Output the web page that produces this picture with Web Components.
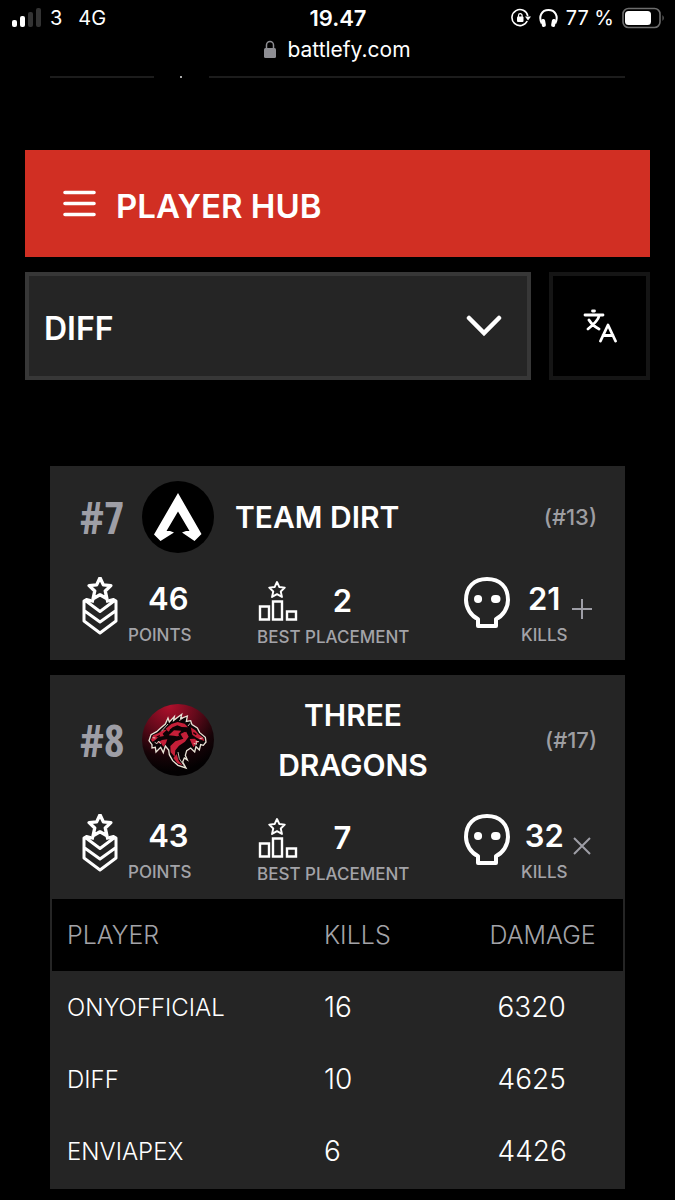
<!DOCTYPE html>
<html lang="en">
<head>
<meta charset="utf-8">
<meta name="viewport" content="width=device-width, initial-scale=1">
<title>Battlefy – Player Hub</title>
<style>
  body { margin: 0; background: #000; color: #fff; font-family: Inter, "Liberation Sans", sans-serif; }
</style>
</head>
<body>
<phone-status></phone-status>
<hub-page>
  <hub-menu>PLAYER HUB</hub-menu>
  <hub-filter></hub-filter>
  <team-card slot="teams" rank="#7" overall="(#13)" points="46" placement="2" kills="21">
    <team-logo slot="logo" kind="apex"></team-logo>TEAM DIRT
  </team-card>
  <team-card slot="teams" rank="#8" overall="(#17)" points="43" placement="7" kills="32" open>
    <team-logo slot="logo" kind="dragons"></team-logo>THREE DRAGONS
    <player-table slot="players"></player-table>
  </team-card>
</hub-page>

<script>
const define = (name, html, setup) => customElements.define(name, class extends HTMLElement {
  constructor() {
    super();
    this.attachShadow({ mode: 'open' }).innerHTML = typeof html === 'function' ? html(this) : html;
    if (setup) setup(this, this.shadowRoot);
  }
});

define('phone-status', `
<style>
  :host { display: block; font-size: 21px; }
  .bar { display: grid; grid-template-columns: 1fr auto 1fr; align-items: center; height: 36px; padding: 0 10px 0 11px; font-size: 20px; }
  .left, .right, .url { display: flex; align-items: center; }
  .right { justify-content: flex-end; gap: 8px; }
  .left span { margin-left: 8px; }
  .left span + span { margin-left: 16px; }
  time { font-weight: 600; font-size: 22px; }
  .url { justify-content: center; gap: 11px; height: 26px; }
  svg { display: block; }
</style>
<div class="bar">
  <div class="left">
    <svg width="31" height="20" viewBox="0 0 31 20"><g fill="#fff"><rect x="1" y="12" width="5" height="7" rx="2"/><rect x="9" y="8" width="5" height="11" rx="2"/></g><g fill="#333"><rect x="17" y="4" width="5" height="15" rx="2"/><rect x="25" y="0" width="5" height="19" rx="2"/></g></svg>
    <span>3</span><span>4G</span>
  </div>
  <time>19.47</time>
  <div class="right">
    <svg width="20" height="20" viewBox="0 0 20 20"><path d="M16.200 13A8 8 0 1 1 16.800 8" fill="none" stroke="#fff" stroke-width="1.600"/><path d="M14 8.600h6l-3 4z" fill="#fff"/><rect x="6" y="8.500" width="6.500" height="5.500" rx="1" fill="#fff"/><path d="M7.500 9V7.500a1.800 1.800 0 0 1 3.600 0V9" fill="none" stroke="#fff" stroke-width="1.200"/></svg>
    <svg width="19" height="20" viewBox="0 0 19 20"><path d="M2.800 15.500C-1 8 3 2 9.500 2S20 8 16.200 15.500" fill="none" stroke="#fff" stroke-width="2"/><rect x="2.500" y="11" width="4" height="8" rx="1.800" fill="#fff" transform="rotate(-10 4 15)"/><rect x="12.500" y="11" width="4" height="8" rx="1.800" fill="#fff" transform="rotate(10 15 15)"/></svg>
    <span>77 %</span>
    <svg width="43" height="22" viewBox="0 0 43 22"><rect x="1" y="1.500" width="37" height="19" rx="5.500" fill="none" stroke="#6d6d6d" stroke-width="1.600"/><rect x="3" y="4" width="26" height="14" rx="3.500" fill="#fff"/><path d="M40.500 8q2.500 3 0 6z" fill="#6d6d6d"/></svg>
  </div>
</div>
<div class="url">
  <svg width="12" height="18" viewBox="0 0 12 18"><path d="M2.500 9V5a3.500 3.500 0 0 1 7 0v4" fill="none" stroke="#8e8e93" stroke-width="1.500"/><rect x="0" y="8" width="12" height="10" rx="1.500" fill="#8e8e93"/></svg>
  <span>battlefy.com</span>
</div>`);

define('hub-page', `
<style>
  :host { display: block; padding: 0 25px 11px; }
  .rule { display: grid; grid-template-columns: 104px 1fr; column-gap: 55px; height: 2px; margin: 14px 25px 72px; position: relative; }
  .rule i { background: #1c1c1c; }
  .rule b { position: absolute; left: 130px; width: 2px; height: 2px; background: #aaa; }
  .teams { display: flex; flex-direction: column; gap: 15px; margin: 86px 25px 0; }
</style>
<div class="rule"><i></i><i></i><b></b></div>
<main><slot></slot><div class="teams"><slot name="teams"></slot></div></main>`);

define('hub-menu', `
<style>
  :host { display: block; }
  button { display: flex; align-items: center; gap: 20px; width: 100%; height: 107px; padding: 4px 38px 0; border: 0; background: #d12f23; color: #fff; font: 600 33px Inter, sans-serif; text-align: left; }
  svg { margin-bottom: 4px; }
</style>
<button type="button"><svg width="33" height="27" viewBox="0 0 33 27"><path d="M2 2.500h29M2 13.500h29M2 24.500h29" stroke="#fff" stroke-width="3.600" stroke-linecap="round"/></svg><slot></slot></button>`);

define('hub-filter', `
<style>
  :host { display: flex; gap: 18px; margin-top: 15px; }
  .pick { position: relative; flex: 1; }
  select, button { box-sizing: border-box; height: 108px; border-radius: 0; }
  select { appearance: none; display: block; width: 100%; padding: 4px 60px 0 15px; border: 4px solid #373737; background: #252525; color: #fff; font: 600 32px Inter, sans-serif; }
  .pick svg { position: absolute; right: 29px; top: 43px; pointer-events: none; }
  button { width: 101px; padding: 0; border: 4px solid #151515; background: #000; display: grid; place-items: center; }
</style>
<div class="pick">
  <select aria-label="Player"><option>DIFF</option><option>ONYOFFICIAL</option><option>ENVIAPEX</option></select>
  <svg width="36" height="22" viewBox="0 0 36 22"><path d="M3 3 18 18 33 3" fill="none" stroke="#fff" stroke-width="4.500" stroke-linecap="round"/></svg>
</div>
<button type="button" aria-label="Language"><svg width="34" height="34" viewBox="0 0 34 34" fill="none" stroke="#fff" stroke-width="2.800" stroke-linecap="round" stroke-linejoin="round"><path d="M9.500 2h2M2 6h18M16.500 6C15 12 9.500 16.500 5 20M6 11c2.500 4 6 7 10 9M17.500 32 25 16l7.500 16M20 26.500h10"/></svg></button>`);

const logos = {
  apex: `<svg viewBox="0 0 72 72"><circle cx="36" cy="36" r="36"/><path d="M36 12 59.500 53 52.500 60 40 51.500 44 50H47.500L36 30.500 24.500 50H28l4 1.500L18.500 60 12 53.500z" fill="#fff"/></svg>`,
  dragons: `<svg viewBox="0 0 216 216"><defs><radialGradient id="g" cx=".38" cy=".02" r=".92"><stop offset="0" stop-color="#b0102c"/><stop offset=".4" stop-color="#660a1b"/><stop offset=".78" stop-color="#160307"/><stop offset="1" stop-color="#030102"/></radialGradient></defs>
  <circle cx="108" cy="108" r="108" fill="url(#g)"/>
  <path d="M21 110 27 92 44 83 56 72 70 60 78 42 82 54 97 38 95 49 119 31 116 44 136 36 133 52 146 50 150 62 166 72 173 86 190 100 192 114 184 124 176 122 172 138 162 128 158 144 146 132 134 140 130 154 136 168 127 162 122 174 132 192 108 184 92 170 82 152 80 138 70 126 64 146 56 130 42 144 40 130 30 132 30 122z" fill="#0b0305" stroke="#e9e3d6" stroke-width="4"/>
  <g fill="#c51f38"><path d="M27 108 33 94 48 88 66 77 74 78 62 89 66 96 50 99 40 108 32 113z"/><path d="M44 118 60 108 76 106 72 118 64 128 57 117z"/><path d="M71 74 88 60 107 54 128 59 138 70 119 69 106 64 92 70 79 83z"/><path d="M80 94 96 79 118 80 109 90 114 98 95 95z"/><path d="M115 90 132 82 140 98 129 113 111 125 100 139 98 158 86 145 85 126 100 112 124 104z"/><path d="M146 70 160 79 170 91 184 101 187 111 172 106 160 99 151 92z"/><path d="M143 105 158 104 170 114 162 120 154 130z"/><path d="M94 162 104 150 110 170 122 184 106 178z"/></g>
  <g fill="none" stroke="#e9e3d6" stroke-width="2.500"><path d="M58 82 78 60M112 50 124 41M138 66 144 58M38 115l7 4 5-8 6 9M171 113l-9-1 2 9-9-3M108 144 112 164 127 186M32 101l8 1M182 102l-9 2"/></g>
  <path d="M44 99l10-4M154 86l9 6M84 78l13-7M105 101l12-9M137 73l-7 11M96 108l-8-7M70 87l10 9" stroke="#120204" stroke-width="4"/></svg>`
};
define('team-logo', host => `
<style>:host { display: block; width: 72px; height: 72px; } svg { display: block; width: 100%; height: 100%; }</style>${logos[host.getAttribute('kind')]}`);

const star = 'M0-10 3-3.700 9.700-3 4.700 1.800 6.200 8.700 0 5.200-6.200 8.700-4.700 1.800-9.700-3-3-3.700z';
define('team-card', host => {
  const a = n => host.getAttribute(n);
  const open = host.hasAttribute('open');
  return `
<style>
  :host { display: block; background: #252525; }
  header { display: flex; align-items: center; gap: 21px; min-height: 72px; padding: 15px 28px 24px 30px; }
  .rank { width: 41px; color: #9e9ea6; font: bold 44px/50px "Liberation Sans Narrow", "Open Sans Condensed", sans-serif; }
  h2 { max-width: 236px; margin: 0; font-size: 30px; font-weight: 600; line-height: 50px; text-align: center; }
  .overall { margin-left: auto; color: #9e9ea2; font-size: 22px; font-weight: 500; }
  .stats { display: grid; grid-template-columns: 175fr 207fr 133fr; height: 68px; padding: 0 28px 15px 32px; }
  .stat { display: flex; align-items: flex-start; }
  dl { margin: 0; display: flex; flex-direction: column-reverse; gap: 4px; text-align: center; }
  dt { color: #a3a3a8; font-size: 17px; font-weight: 500; line-height: 20px; white-space: nowrap; }
  dd { margin: 0; font-size: 31px; font-weight: 600; line-height: 44px; }
  .points dl { margin-left: 10px; }
  .points dd { padding-right: 3px; text-align: right; }
  .kills dl { margin-left: 11px; }
  .place { display: grid; grid-template-columns: 149px; grid-template-rows: 68px; }
  .place > * { grid-area: 1 / 1; }
  .place svg { margin-top: 4px; margin-left: 1px; }
  .place dl { padding-top: 2px; }
  .place dd { padding-left: 22px; }
  svg { display: block; flex: none; fill: none; stroke: #fff; stroke-linejoin: round; }
  button { margin: 22px 0 0 4px; padding: 0; border: 0; background: none; }
  button svg { stroke: #9e9ea6; stroke-width: 2; }
</style>
<article>
  <header><span class="rank">${a('rank')}</span><slot name="logo"></slot><h2><slot></slot></h2><span class="overall">${a('overall')}</span></header>
  <div class="stats">
    <div class="stat points">
      <svg width="36" height="58" viewBox="0 0 36 58" stroke-width="3"><path d="${star}" transform="translate(18 12) scale(1.120)" /><path d="M12 24.500 4.500 22.500 2 24v20L18 56 34 44V24l-2.500-1.500L24 24.500M4 24 18 34.500 32 24M2 33.500 18 45 34 33.500"/></svg>
      <dl><dt>POINTS</dt><dd>${a('points')}</dd></dl>
    </div>
    <div class="stat place">
      <svg width="40" height="42" viewBox="0 0 40 42" stroke-width="2.400"><path d="${star}" transform="translate(19 9) scale(.8)"/><path d="M2 25.500h9v13H2zM15 20.500h9v18h-9zM29 30.500h9v8h-9z" stroke-linejoin="miter"/></svg>
      <dl><dt>BEST PLACEMENT</dt><dd>${a('placement')}</dd></dl>
    </div>
    <div class="stat kills">
      <svg width="46" height="52" viewBox="0 0 46 52" stroke-width="4"><path d="M14 49V42C7 39 2 31 2 23 2 10 10 2 23 2s21 8 21 21c0 8-5 16-12 19v7z"/><path d="M14 22h.1M31 22h1.500" stroke-width="8" stroke-linecap="round"/></svg>
      <dl><dt>KILLS</dt><dd>${a('kills')}</dd></dl>
      <button type="button" aria-expanded="${open}" aria-label="Players"><svg width="20" height="20" viewBox="0 0 20 20"><path d="${open ? 'M2 2 18 18M18 2 2 18' : 'M10 0V20M0 10H20'}"/></svg></button>
    </div>
  </div>
  <slot name="players"></slot>
</article>`;
});

define('player-table', `
<style>
  :host { display: block; padding: 2px; }
  table { width: 100%; border-collapse: collapse; table-layout: fixed; font-weight: 300; }
  th, td { height: 72px; padding: 0 0 0 15px; text-align: left; font-weight: 300; }
  th { background: #000; color: #a3a3a8; font-size: 25px; }
  td { font-size: 28px; }
  td:first-child { font-size: 24px; }
  td:last-child { padding-left: 23px; }
  .player { width: 45%; } .kills { width: 29%; }
</style>
<table>
  <colgroup><col class="player"><col class="kills"><col></colgroup>
  <thead><tr><th scope="col">PLAYER</th><th scope="col">KILLS</th><th scope="col">DAMAGE</th></tr></thead>
  <tbody>
    <tr><td>ONYOFFICIAL</td><td>16</td><td>6320</td></tr>
    <tr><td>DIFF</td><td>10</td><td>4625</td></tr>
    <tr><td>ENVIAPEX</td><td>6</td><td>4426</td></tr>
  </tbody>
</table>`);
</script>
</body>
</html>
